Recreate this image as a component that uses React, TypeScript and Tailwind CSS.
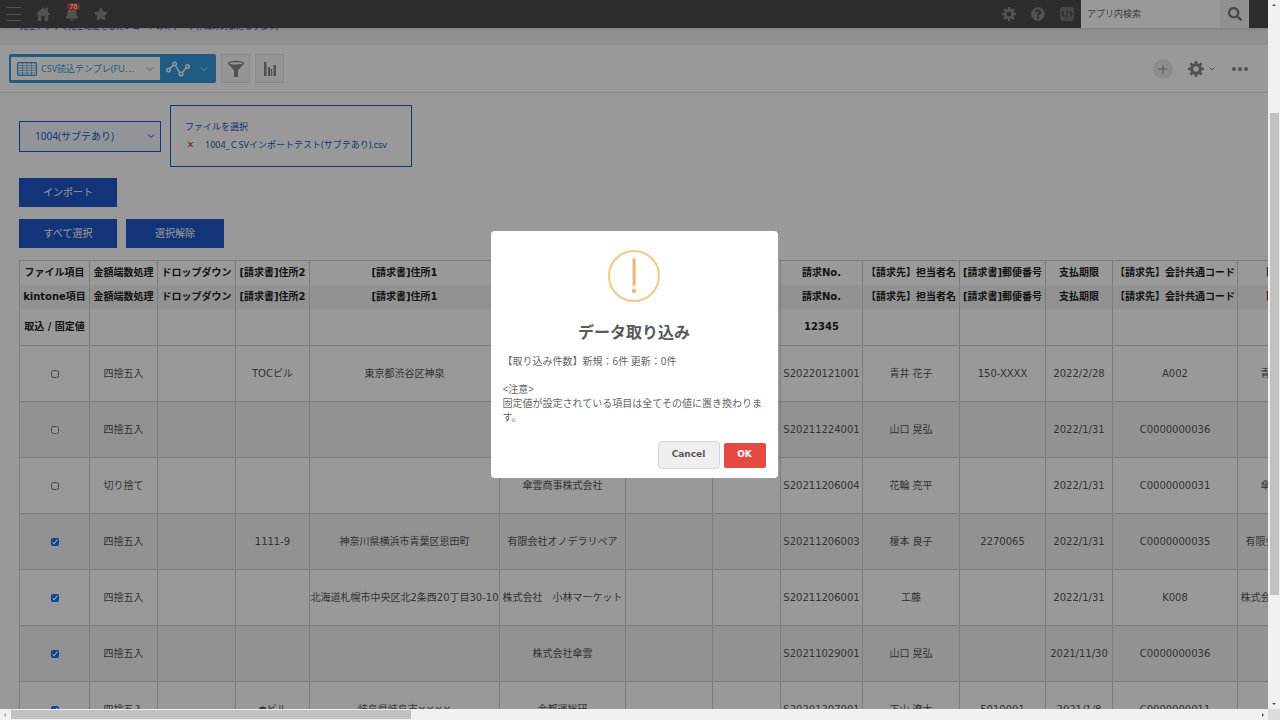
import React from "react";
import { FaStar, FaBell, FaQuestionCircle, FaSearch } from "react-icons/fa";
import { ChevronDown, Plus } from "lucide-react";

type Row = { checked: boolean; cells: string[] };

const columns = [
  { width: "w-[70px]", file: "ファイル項目", kintone: "kintone項目", fixed: "取込 / 固定値" },
  { width: "w-[68px]", file: "金額端数処理", kintone: "金額端数処理", fixed: "" },
  { width: "w-[78px]", file: "ドロップダウン", kintone: "ドロップダウン", fixed: "" },
  { width: "w-[74px]", file: "[請求書]住所2", kintone: "[請求書]住所2", fixed: "" },
  { width: "w-[190px]", file: "[請求書]住所1", kintone: "[請求書]住所1", fixed: "" },
  { width: "w-[126px]", file: "", kintone: "", fixed: "" },
  { width: "w-[87px]", file: "", kintone: "", fixed: "" },
  { width: "w-[68px]", file: "", kintone: "", fixed: "" },
  { width: "w-[82px]", file: "請求No.", kintone: "請求No.", fixed: "12345" },
  { width: "w-[97px]", file: "【請求先】担当者名", kintone: "【請求先】担当者名", fixed: "" },
  { width: "w-[86px]", file: "[請求書]郵便番号", kintone: "[請求書]郵便番号", fixed: "" },
  { width: "w-[67px]", file: "支払期限", kintone: "支払期限", fixed: "" },
  { width: "w-[125px]", file: "【請求先】会計共通コード", kintone: "【請求先】会計共通コード", fixed: "" },
  { width: "w-[126px]", file: "【請求先】会社名", kintone: "【請求先】会社名", fixed: "" },
];

const rows: Row[] = [
  { checked: false, cells: ["四捨五入", "", "TOCビル", "東京都渋谷区神泉", "", "", "", "S20220121001", "青井 花子", "150-XXXX", "2022/2/28", "A002", "青井商事株式会社"] },
  { checked: false, cells: ["四捨五入", "", "", "", "", "", "", "S20211224001", "山口 晃弘", "", "2022/1/31", "C0000000036", ""] },
  { checked: false, cells: ["切り捨て", "", "", "", "傘雲商事株式会社", "", "", "S20211206004", "花輪 亮平", "", "2022/1/31", "C0000000031", "傘雲商事株式会社"] },
  { checked: true, cells: ["四捨五入", "", "1111-9", "神奈川県横浜市青葉区恩田町", "有限会社オノデラリペア", "", "", "S20211206003", "榎本 良子", "2270065", "2022/1/31", "C0000000035", "有限会社オノデラリペア"] },
  { checked: true, cells: ["四捨五入", "", "", "北海道札幌市中央区北2条西20丁目30-10", "株式会社　小林マーケット", "", "", "S20211206001", "工藤", "", "2022/1/31", "K008", "株式会社　小林マーケット"] },
  { checked: true, cells: ["四捨五入", "", "", "", "株式会社傘雲", "", "", "S20211029001", "山口 晃弘", "", "2021/11/30", "C0000000036", ""] },
  { checked: true, cells: ["四捨五入", "", "●ビル", "岐阜県岐阜市××××", "金都運総研", "", "", "S20201207001", "下山 遼太", "5010001", "2021/1/8", "C0000000011", ""] },
];

const toothAngles = [0, 45, 90, 135, 180, 225, 270, 315];

function GearIcon({ className }: { className: string }) {
  return (
    <svg viewBox="0 0 16 16" className={className} fill="currentColor" aria-hidden="true">
      <circle cx="8" cy="8" r="4.3" fill="none" stroke="currentColor" strokeWidth="3" />
      {toothAngles.map((angle) => (
        <path key={angle} d="M6.300 3 6.900 0h2.200L9.700 3z" transform={`rotate(${angle} 8 8)`} />
      ))}
    </svg>
  );
}

function HomeIcon() {
  return (
    <svg viewBox="0 0 14 14" className="size-3.5" fill="currentColor" aria-hidden="true">
      <path d="M7 0.3 0 7.2l1 1 .8-.7V14h3.6V9h3.2v5h3.6V7.500l.8.7 1-1-2.100-2.100V.8H9.800v2.300z" />
    </svg>
  );
}

function CodeIcon() {
  return (
    <svg viewBox="0 0 14 14" className="size-3.5" aria-hidden="true">
      <rect width="14" height="14" rx="3" fill="currentColor" />
      <path d="M4 4.500 1.800 7 4 9.500M10 4.500 12.200 7 10 9.500M8 3.800 6 10.200" fill="none" stroke="#4b4b4b" strokeWidth="1.200" />
    </svg>
  );
}

function TopBar() {
  return (
    <header className="relative z-10 flex h-7 shrink-0 items-center bg-[#4b4b4b] text-[#8b8b8b] shadow">
      <nav className="flex items-center gap-[15px] pl-[7px]">
        <button type="button" aria-label="メニュー" className="flex h-3.5 w-3.5 flex-col justify-between">
          <span className="h-px w-full bg-current" />
          <span className="h-px w-full bg-current" />
          <span className="h-px w-full bg-current" />
        </button>
        <a href="#home" aria-label="ホーム"><HomeIcon /></a>
        <a href="#notifications" aria-label="通知" className="relative">
          <FaBell className="h-3.5 w-3.5" />
          <span className="absolute -top-1 left-0.5 flex h-[7px] w-[13px] items-center justify-center rounded-full bg-[#e2483a] text-[7px] leading-none text-white">76</span>
        </a>
        <a href="#favorites" aria-label="お気に入り"><FaStar className="h-3.5 w-3.5" /></a>
      </nav>
      <div className="ml-auto flex h-full items-center gap-[15px] pr-[7px]">
        <button type="button" aria-label="設定"><GearIcon className="h-3.5 w-3.5" /></button>
        <button type="button" aria-label="ヘルプ"><FaQuestionCircle className="h-3.5 w-3.5" /></button>
        <button type="button" aria-label="開発者" className="text-[#777777]"><CodeIcon /></button>
      </div>
      <form className="flex h-full">
        <input type="search" aria-label="アプリ内検索" placeholder="アプリ内検索" className="h-full w-[139px] bg-white px-1.5 pb-0.5 text-[9px] placeholder:text-[#666666]" />
        <button type="button" aria-label="検索" className="flex w-[29px] items-center justify-center bg-[#f0f0f0] text-[#777777]"><FaSearch className="h-3.5 w-3.5" /></button>
        <span className="w-[19px]" />
      </form>
    </header>
  );
}

function Toolbar() {
  return (
    <div className="flex h-12 shrink-0 items-center border-b border-[#e6e6e6] pl-[9px] pr-5">
      <div className="flex h-[29px] items-center rounded-xs bg-[#3498db] p-0.5 pr-0 text-[#3498db]">
        <button type="button" className="flex h-[23px] w-[149px] items-center bg-white pl-[6px] pr-1 text-[9px]">
          <svg viewBox="0 0 20 14" className="h-3.5 w-5 shrink-0" fill="none" stroke="currentColor" aria-hidden="true">
            <rect x=".6" y=".6" width="18.800" height="12.800" rx="1" strokeWidth="1.200" />
            <path d="M1 3.500h18M1 6h18M1 8.500h18M1 11h18M5.500 1v12M10 1v12M14.500 1v12" strokeWidth=".6" />
          </svg>
          <span className="ml-1 whitespace-nowrap">CSV読込テンプレ(FU⋯</span>
          <ChevronDown className="ml-auto h-3 w-3 shrink-0" strokeWidth={1.5} />
        </button>
        <button type="button" aria-label="グラフ" className="flex h-full items-center gap-2 px-1.5 text-white">
          <svg viewBox="0 0 24 16" className="h-4 w-6" fill="none" stroke="currentColor" strokeWidth="1.400" aria-hidden="true">
            <path d="M3.800 7.500 7 4.300M9.500 4.700 13.500 11.300M16.300 11.500 20.300 6.800" />
            <circle cx="2.500" cy="9" r="1.800" /><circle cx="8.500" cy="3" r="1.800" /><circle cx="15" cy="13" r="1.800" /><circle cx="21.500" cy="5.500" r="1.800" />
          </svg>
          <ChevronDown className="h-3 w-3" strokeWidth={1.5} />
        </button>
      </div>
      <button type="button" aria-label="絞り込み" className="ml-[5px] flex size-[29px] items-center justify-center border border-[#e3e7e8] bg-[#f7f9fa] text-[#888888]">
        <svg viewBox="0 0 18 18" className="size-[18px]" aria-hidden="true">
          <path d="M1 3.500 7 10.500V17h4v-6.500L17 3.500z" fill="currentColor" />
          <ellipse cx="9" cy="3.300" rx="7.300" ry="1.800" fill="#f7f9fa" stroke="currentColor" strokeWidth="1.400" />
        </svg>
      </button>
      <button type="button" aria-label="集計" className="ml-[5px] flex size-[29px] items-center justify-center border border-[#e3e7e8] bg-[#f7f9fa] text-[#888888]">
        <svg viewBox="0 0 12 14" className="h-3.5 w-3" fill="currentColor" aria-hidden="true">
          <path d="M0 0h2.500v14H0zM4 5h2v9H4zM6.800 7h1.500v7H6.800zM9.500 3H12v11H9.500z" />
        </svg>
      </button>
      <div className="ml-auto flex items-center text-[#888888]">
        <button type="button" aria-label="追加" className="flex size-5 items-center justify-center rounded-full bg-[#ececec]"><Plus className="h-3.5 w-3.5" strokeWidth={1.5} /></button>
        <button type="button" aria-label="アプリ設定" className="ml-[15px] flex items-center gap-1"><GearIcon className="h-4 w-4" /><ChevronDown className="h-2 w-2" strokeWidth={3} /></button>
        <button type="button" aria-label="その他" className="ml-4 flex gap-0.5">
          <span className="size-1 rounded-full bg-current" /><span className="size-1 rounded-full bg-current" /><span className="size-1 rounded-full bg-current" />
        </button>
      </div>
    </div>
  );
}

function Controls() {
  const button = "h-[29px] w-[98px] bg-[#2158c8] text-[10px] text-white";
  return (
    <div className="pl-[19px] pt-3">
      <div className="flex items-center gap-[9px]">
        <div className="relative flex h-[31px] w-[142px] items-center">
          <select aria-label="テンプレート" className="h-full w-full appearance-none border border-[#2158c8] bg-[#f5f7ff] pl-[15px] text-[10px] text-[#2158c8]">
            <option>1004(サブテあり)</option>
          </select>
          <ChevronDown className="pointer-events-none absolute right-1 h-3 w-3 text-[#2158c8]" />
        </div>
        <div className="flex h-[62px] w-[242px] flex-col justify-center border border-[#2158c8] px-3.5 text-[9px] leading-[18px] text-[#2158c8]">
          <button type="button" className="self-start">ファイルを選択</button>
          <div className="flex items-center">
            <button type="button" aria-label="ファイルを削除" className="w-5 pl-0.5 text-left text-[12px] text-[#e83030]">×</button>
            <span className="whitespace-nowrap">1004_ＣSVインポートテスト(サブテあり).csv</span>
          </div>
        </div>
      </div>
      <button type="button" className={`${button} mt-[11px] block`}>インポート</button>
      <div className="mt-3 flex gap-[9px]">
        <button type="button" className={button}>すべて選択</button>
        <button type="button" className={button}>選択解除</button>
      </div>
    </div>
  );
}

function ImportTable() {
  return (
    <table className="ml-[19px] mt-3 w-[1344px] table-fixed border-collapse border border-[#d0d0d0] text-center font-['DejaVu_Sans','Noto_Sans_CJK_JP',sans-serif] text-[10px] leading-4 whitespace-nowrap text-[#555555]">
      <colgroup>{columns.map((c, i) => <col key={i} className={c.width} />)}</colgroup>
      <thead className="text-[#222222]">
        <tr className="h-6">{columns.map((c, i) => <th key={i} className="border-x border-[#d0d0d0] p-0">{c.file}</th>)}</tr>
        <tr className="h-6 bg-[#f3f3f3]">{columns.map((c, i) => <th key={i} className="border-x border-[#d0d0d0] p-0">{c.kintone}</th>)}</tr>
        <tr className="h-[37px]">{columns.map((c, i) => <th key={i} className="border-x border-[#d0d0d0] p-0">{c.fixed}</th>)}</tr>
      </thead>
      <tbody>
        {rows.map((row, r) => (
          <tr key={r} className="h-14 even:bg-[#f3f3f3]">
            <td className="border border-[#d0d0d0] p-0">
              <input type="checkbox" aria-label={`${r + 1}行目`} defaultChecked={row.checked} className="m-0 size-2 align-middle" />
            </td>
            {row.cells.map((cell, i) => <td key={i} className="border border-[#d0d0d0] p-0">{cell}</td>)}
          </tr>
        ))}
      </tbody>
    </table>
  );
}

function ConfirmDialog() {
  return (
    <div className="absolute inset-0 z-20 flex items-center justify-center bg-black/40">
      <div role="dialog" aria-modal="true" aria-labelledby="dialog-title" className="flex w-[287px] flex-col rounded-sm bg-white px-3 pb-[9px] pt-[19px] text-[#666666]">
        <svg viewBox="0 0 52 52" className="size-[52px] self-center" aria-hidden="true">
          <circle cx="26" cy="26" r="25" fill="none" stroke="#f8c583" strokeWidth="2" />
          <rect x="24.500" y="8" width="3.200" height="28" rx="1.500" fill="#f8b47c" />
          <circle cx="26" cy="41" r="2.200" fill="#f8b47c" />
        </svg>
        <h2 id="dialog-title" className="mt-[18px] text-center text-[16px] leading-6 font-bold text-[#595959]">データ取り込み</h2>
        <div className="mt-2.5 text-[10px] leading-3.5">
          <p>【取り込み件数】新規：6件 更新：0件</p>
          <p className="mt-3.5">&lt;注意&gt;</p>
          <p>固定値が設定されている項目は全てその値に置き換わります。</p>
        </div>
        <div className="mt-[17px] flex items-center justify-end gap-1 font-['DejaVu_Sans',sans-serif] text-[9px] font-bold">
          <button type="button" className="h-7 w-[62px] rounded-sm border border-[#d0d7df] bg-[#efefef] text-[#555555]">Cancel</button>
          <button type="button" className="h-[25px] w-[42px] rounded-xs bg-[#e64942] text-white">OK</button>
        </div>
      </div>
    </div>
  );
}

export default function App() {
  return (
    <div className="grid h-screen grid-cols-[minmax(0,1fr)_12px] grid-rows-[minmax(0,1fr)_11px] bg-[#f1f1f1] font-['Noto_Sans','Noto_Sans_CJK_JP',sans-serif]">
      <div className="relative flex flex-col overflow-hidden bg-white">
        <TopBar />
        <div className="flex h-[17px] shrink-0 items-start bg-[#f0f0f0]">
          <p className="-mt-2 pl-5 text-[8px] leading-3 whitespace-nowrap text-[#3a32c0]">完全アプリで完全確定をしたレコードのみデータ作成の対象になります。</p>
        </div>
        <Toolbar />
        <main className="shrink-0">
          <Controls />
          <ImportTable />
        </main>
        <ConfirmDialog />
      </div>
      <div className="flex flex-col items-center py-1">
        <span className="border-x-2 border-b-2 border-x-transparent border-b-[#505050]" />
        <span className="mt-[107px] h-[482px] w-[9px] bg-[#c1c1c1]" />
        <span className="mt-auto border-x-2 border-t-2 border-x-transparent border-t-[#505050]" />
      </div>
      <div className="flex items-center px-1">
        <span className="border-y-2 border-r-2 border-y-transparent border-r-[#a3a3a3]" />
        <span className="ml-[5px] h-[9px] w-[400px] bg-[#c1c1c1]" />
        <span className="ml-auto border-y-2 border-l-2 border-y-transparent border-l-[#505050]" />
      </div>
      <div className="bg-[#dcdcdc]" />
    </div>
  );
}
